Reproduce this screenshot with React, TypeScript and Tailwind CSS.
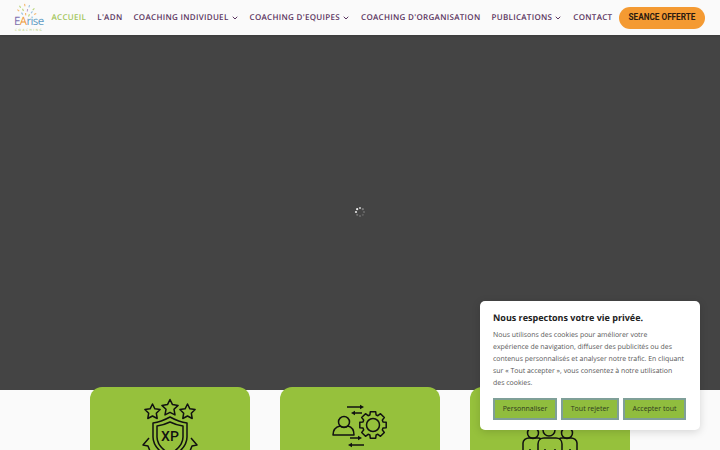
import { ChevronDown } from 'lucide-react';

const NAV_ITEMS = [
  { label: 'ACCUEIL', active: true },
  { label: "L'ADN" },
  { label: 'COACHING INDIVIDUEL', caret: true },
  { label: "COACHING D'EQUIPES", caret: true },
  { label: "COACHING D'ORGANISATION" },
  { label: 'PUBLICATIONS', caret: true },
  { label: 'CONTACT' },
];

function Logo() {
  const rays = [
    [19, 6, '#9cc443', -30], [24, 4, '#f49b33', -10], [29, 5, '#6fa8d6', 15], [34, 8, '#9cc443', 45],
    [17, 10, '#f49b33', -50], [22, 9, '#9cc443', -25], [27, 9, '#a77fb8', 5], [32, 11, '#6fa8d6', 35], [36, 13, '#f49b33', 65],
    [21, 13, '#6fa8d6', -35], [25, 13, '#f49b33', -5], [29, 14, '#9cc443', 25],
  ] as const;
  return (
    <div className="relative h-[28px] w-[30px] shrink-0">
      <svg viewBox="14 2 30 16" className="absolute left-0 top-[-2px] h-[16px] w-[30px]">
        {rays.map(([x, y, c, a], i) => (
          <rect key={i} x={x} y={y} width="1.1" height="2.4" fill={c} opacity="0.7" transform={`rotate(${a} ${x} ${y})`} />
        ))}
      </svg>
      <span className="absolute left-0 top-[12px] text-[11.5px] leading-[12px] tracking-[-0.6px] text-[#7d6fb0]">
        E<span className="text-[#ef9a3c]">A</span>
        <span className="text-[#5f9cc4]">rise</span>
      </span>
      <span className="absolute left-[1px] top-[24px] text-[3px] leading-[4px] tracking-[1.6px] text-[#9cc443]">COACHING</span>
    </div>
  );
}

function Header() {
  return (
    <header className="relative flex h-[35px] items-center bg-[#fafafa] pl-[14px] pr-[15px] shadow-[0_1px_2px_rgba(0,0,0,0.15)]">
      <Logo />
      <nav className="ml-[7.5px] flex items-center gap-[11px]">
        {NAV_ITEMS.map((item) => (
          <span
            key={item.label}
            className={`flex items-center whitespace-nowrap text-[8px] font-semibold tracking-[0.3px] ${
              item.active ? 'text-[#a3c65a]' : 'text-[#5a3560]'
            }`}
          >
            {item.label}
            {item.caret ? <ChevronDown className="ml-[2px] h-[8px] w-[8px]" strokeWidth={3} /> : null}
          </span>
        ))}
      </nav>
      <button
        type="button"
        className="ml-auto flex h-[22px] w-[86px] shrink-0 items-center justify-center whitespace-nowrap rounded-full bg-[#f49a32] font-['Roboto'] text-[8.2px] font-bold text-[#2b1a10]"
      >
        SEANCE OFFERTE
      </button>
    </header>
  );
}

function Spinner() {
  return (
    <svg viewBox="0 0 12 12" className="h-[12px] w-[12px] blur-[0.4px]">
      {[...Array(8)].map((_, i) => (
        <circle
          key={i}
          cx={6 + 4 * Math.cos((i * Math.PI) / 4)}
          cy={6 + 4 * Math.sin((i * Math.PI) / 4)}
          r="1.1"
          fill="#fff"
          opacity={[0.2, 0.15, 0.2, 0.25, 0.85, 0.9, 0.7, 0.3][i]}
        />
      ))}
    </svg>
  );
}

const star = (cx: number, cy: number, r: number) => {
  const pts: string[] = [];
  for (let i = 0; i < 10; i++) {
    const a = -Math.PI / 2 + (i * Math.PI) / 5;
    const rad = i % 2 === 0 ? r : r * 0.5;
    pts.push(`${(cx + rad * Math.cos(a)).toFixed(1)},${(cy + rad * Math.sin(a)).toFixed(1)}`);
  }
  return pts.join(' ');
};

function XpIcon() {
  return (
    <svg viewBox="0 0 60 63" className="h-[63px] w-[60px]" fill="none" stroke="#111" strokeWidth="1.5" strokeLinejoin="round">
      <polygon points={star(12.5, 15, 8)} />
      <polygon points={star(30, 11, 8.5)} />
      <polygon points={star(47.5, 15, 8)} />
      <path d="M30 20 q9 5 17 6 v14 c0 10 -8 16 -17 21 c-9 -5 -17 -11 -17 -21 v-14 q8 -1 17 -6 z" />
      <path d="M30 25 q6 3 13 4 v11 c0 8 -6 13 -13 17 c-7 -4 -13 -9 -13 -17 v-11 q7 -1 13 -4 z" />
      <path d="M9 41 l-6 7 l5 1 l2 5" />
      <path d="M51 41 l6 7 l-5 1 l-2 5" />
      <text x="30" y="43.5" textAnchor="middle" fill="#111" stroke="none" className="font-['Roboto'] text-[14px] font-medium">XP</text>
    </svg>
  );
}

function Arrow({ x1, x2, y }: { x1: number; x2: number; y: number }) {
  const dir = x2 > x1 ? 1 : -1;
  return (
    <>
      <path d={`M${x1} ${y} H${x2 - dir * 3}`} />
      <polygon points={`${x2},${y} ${x2 - dir * 4},${y - 2.2} ${x2 - dir * 4},${y + 2.2}`} fill="#111" stroke="none" />
    </>
  );
}

function ExchangeIcon() {
  const teeth: string[] = [];
  for (let i = 0; i < 8; i++) {
    const base = (i * Math.PI) / 4;
    [[-0.3, 10.5], [-0.2, 13.5], [0.2, 13.5], [0.3, 10.5]].forEach(([d, r]) => {
      teeth.push(`${(43 + r * Math.cos(base + d)).toFixed(1)},${(28 + r * Math.sin(base + d)).toFixed(1)}`);
    });
  }
  return (
    <svg viewBox="0 0 60 63" className="h-[63px] w-[60px]" fill="none" stroke="#111" strokeWidth="1.5" strokeLinejoin="round">
      <Arrow x1={17} x2={34} y={10} />
      <Arrow x1={32} x2={21} y={16} />
      <circle cx="14" cy="25" r="5.5" />
      <path d="M3 38 c0 -5 3 -8 7 -9 c2 1.5 6 1.5 8 0 c4 1 6 4 6 9 z" />
      <polygon points={teeth.join(' ')} />
      <circle cx="43" cy="28" r="6.5" />
      <Arrow x1={20} x2={32} y={41} />
      <Arrow x1={34} x2={18} y={48} />
    </svg>
  );
}

function TeamIcon() {
  return (
    <svg viewBox="0 0 60 63" className="h-[63px] w-[60px]" fill="none" stroke="#111" strokeWidth="1.5" strokeLinejoin="round">
      <circle cx="13" cy="36" r="5.5" />
      <circle cx="29" cy="33" r="6" />
      <circle cx="47" cy="36" r="5.5" />
      <path d="M3 63 v-17 c0 -3 3 -5 6 -5 h9 c1 0 2 0 3 1" />
      <path d="M57 63 v-17 c0 -3 -3 -5 -6 -5 h-9 c-1 0 -2 0 -3 1" />
      <path d="M18 63 v-16 c0 -4 3 -6 6 -6 h12 c3 0 6 2 6 6 v16" />
      <path d="M10 52 v11 M25 52 v11 M35 52 v11 M50 52 v11" />
    </svg>
  );
}

function FeatureCards() {
  return (
    <div className="relative mt-[-3px] flex h-[63px] justify-center gap-[30px] overflow-hidden">
      <div className="flex h-[100px] w-[160px] justify-center rounded-[12px] bg-[#96c13c] pt-[10px]">
        <XpIcon />
      </div>
      <div className="flex h-[100px] w-[160px] justify-center rounded-[12px] bg-[#96c13c] pt-[10px]">
        <ExchangeIcon />
      </div>
      <div className="flex h-[100px] w-[160px] justify-center rounded-[12px] bg-[#96c13c] pt-[10px]">
        <TeamIcon />
      </div>
    </div>
  );
}

function CookieBanner() {
  const btn =
    'h-[22px] border-2 border-[#7f9f98] bg-[#90bd3e] text-[7px] text-[#2f3a20] flex items-center justify-center';
  return (
    <div className="absolute left-[480px] top-[301px] h-[129px] w-[220px] rounded-[5px] bg-white px-[13px] pt-[10px] shadow-[0_2px_8px_rgba(0,0,0,0.15)]">
      <h2 className="text-[9px] font-bold leading-[14px] text-[#222]">Nous respectons votre vie privée.</h2>
      <p className="mt-[5px] whitespace-nowrap text-[6.95px] leading-[12px] text-[#555]">
        Nous utilisons des cookies pour améliorer votre
        <br />
        expérience de navigation, diffuser des publicités ou des
        <br />
        contenus personnalisés et analyser notre trafic. En cliquant
        <br />
        sur « Tout accepter », vous consentez à notre utilisation
        <br />
        des cookies.
      </p>
      <div className="mt-[8px] flex gap-[4px]">
        <button type="button" className={`${btn} w-[64px]`}>Personnaliser</button>
        <button type="button" className={`${btn} w-[58px]`}>Tout rejeter</button>
        <button type="button" className={`${btn} w-[63px]`}>Accepter tout</button>
      </div>
    </div>
  );
}

export default function App() {
  return (
    <div className="relative h-[450px] w-[720px] overflow-hidden bg-[#fafafa] font-['Open_Sans',sans-serif] [text-rendering:geometricPrecision]">
      <Header />
      <main className="flex h-[355px] items-center justify-center bg-[#444444] pb-[2px]">
        <Spinner />
      </main>
      <FeatureCards />
      <CookieBanner />
    </div>
  );
}
